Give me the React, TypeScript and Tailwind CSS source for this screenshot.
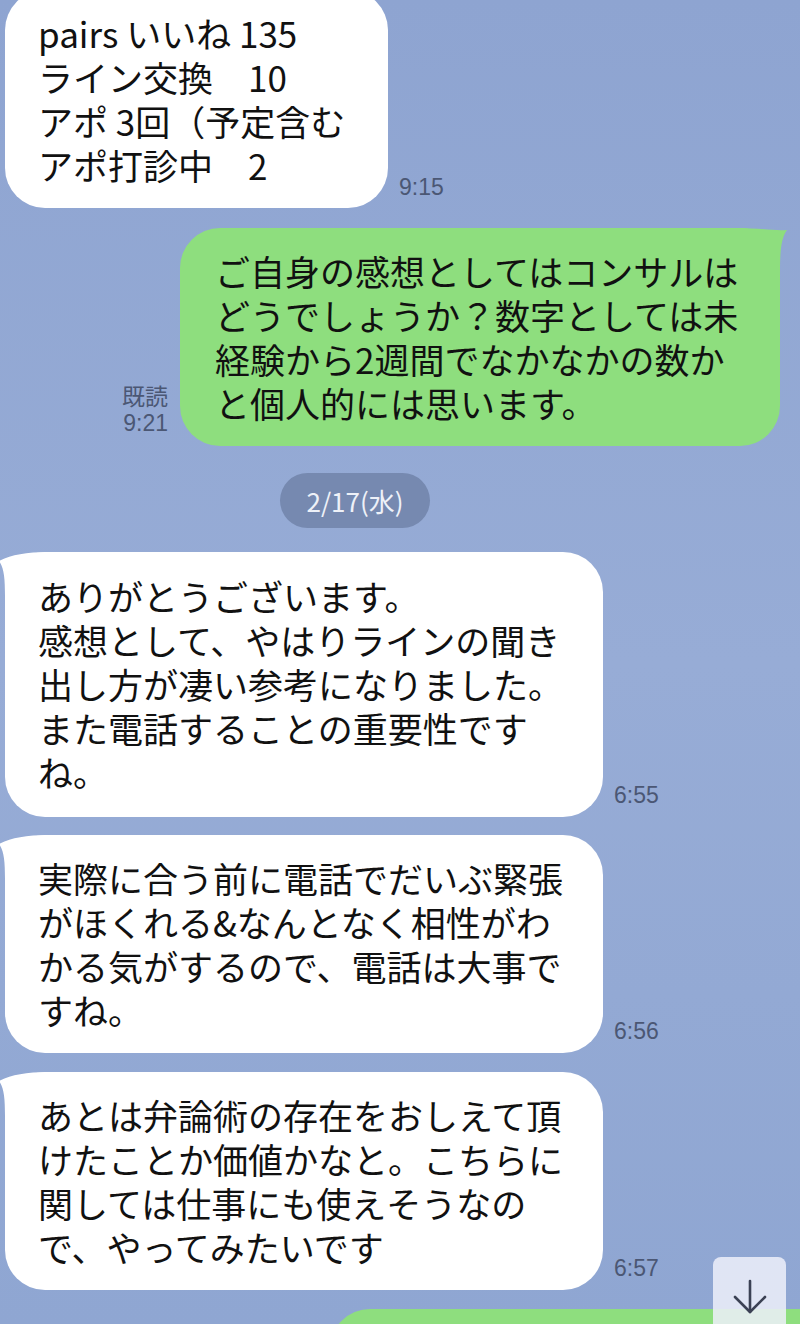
import React from 'react';

const jp = { fontFamily: '"Noto Sans CJK JP", "Noto Sans", sans-serif' };
const num = { fontFamily: '"Liberation Sans", "Noto Sans CJK JP", sans-serif' };

function LeftTail() {
  return (
    <svg className="absolute -left-[6px] top-0" width="50" height="44" viewBox="-6 0 50 44">
      <path d="M44 0 C20 0 6 3 -6 9 C-1 16 0 26 0 44 L44 44 Z" fill="#ffffff" />
    </svg>
  );
}

function RightTail() {
  return (
    <svg className="absolute -right-[7px] top-0" width="52" height="44" viewBox="-45 0 52 44">
      <path d="M-45 0 C-20 0 -6 3 7 2 C1 10 0 24 0 44 L-45 44 Z" fill="#8ede7e" />
    </svg>
  );
}

function Time({ t, mb = 'mb-[10px]' }: { t: string; mb?: string }) {
  return (
    <span className={`ml-[11px] ${mb} text-[23px] leading-[24px] text-[#4b5774]`} style={num}>
      {t}
    </span>
  );
}

function Incoming({
  lines,
  time,
  pad = 'py-[21px]',
  className = '',
}: {
  lines: string[];
  time: string;
  pad?: string;
  className?: string;
}) {
  return (
    <div className={`flex items-end ml-[5px] ${className}`}>
      <div className={`relative bg-white rounded-[40px] pl-[33px] w-[598px] ${pad}`}>
        <LeftTail />
        <div className="relative text-[35px] leading-[44px] text-[#111111] whitespace-pre" style={jp}>
          {lines.map((l, i) => (
            <div key={i}>{l}</div>
          ))}
        </div>
      </div>
      <Time t={time} />
    </div>
  );
}

export default function App() {
  return (
    <div className="relative w-[800px] h-[1324px] overflow-hidden bg-[#8fa6d2]">
      <div className="absolute inset-0 bg-gradient-to-b from-[#8ea4d1] via-[#97acd6] to-[#8fa6d2]" />
      <div className="relative flex flex-col">
        <div className="flex items-end ml-[5px] -mt-[10px]">
          <div className="relative bg-white rounded-[40px] pl-[33px] py-[21px] w-[383px]">
            <div className="text-[35px] leading-[44px] text-[#111111] whitespace-pre" style={jp}>
              <div>pairs いいね 135</div>
              <div>ライン交換　10</div>
              <div>アポ 3回（予定含む</div>
              <div>アポ打診中　2</div>
            </div>
          </div>
          <Time t="9:15" mb="mb-[9px]" />
        </div>

        <div className="flex items-end justify-end mr-[20px] mt-[20px]">
          <div className="flex flex-col items-end mr-[12px] mb-[9px] text-[23px] leading-[28px] text-[#4b5774]" style={jp}>
            <span>既読</span>
            <span style={num}>9:21</span>
          </div>
          <div className="relative bg-[#8ede7e] rounded-[40px] pl-[35px] py-[21px] w-[600px]">
            <RightTail />
            <div className="relative text-[35px] leading-[44px] text-[#111111] whitespace-pre" style={jp}>
              <div>ご自身の感想としてはコンサルは</div>
              <div>どうでしょうか？数字としては未</div>
              <div>経験から2週間でなかなかの数か</div>
              <div>と個人的には思います。</div>
            </div>
          </div>
        </div>

        <div className="ml-[280px] mt-[27px] w-[150px] h-[55px] rounded-full bg-[#7689b0] flex items-center justify-center">
          <span className="text-[26px] text-[#eef1f8]" style={jp}>2/17(水)</span>
        </div>

        <Incoming
          className="mt-[24px]"
          pad="pt-[22px] pb-[23px]"
          time="6:55"
          lines={[
            'ありがとうございます。',
            '感想として、やはりラインの聞き',
            '出し方が凄い参考になりました。',
            'また電話することの重要性です',
            'ね。',
          ]}
        />
        <Incoming
          className="mt-[18px]"
          time="6:56"
          lines={[
            '実際に合う前に電話でだいぶ緊張',
            'がほくれる&なんとなく相性がわ',
            'かる気がするので、電話は大事で',
            'すね。',
          ]}
        />
        <Incoming
          className="mt-[19px]"
          time="6:57"
          lines={[
            'あとは弁論術の存在をおしえて頂',
            'けたことか価値かなと。こちらに',
            '関しては仕事にも使えそうなの',
            'で、やってみたいです',
          ]}
        />

        <div className="ml-[330px] mt-[19px] w-[520px] h-[80px] rounded-[40px] bg-[#8ede7e]" />
      </div>

      <button className="absolute left-[713px] top-[1257px] w-[73px] h-[80px] rounded-[8px] bg-[#eef0fa]/85 flex justify-center pt-[22px]">
        <svg width="34" height="36" viewBox="0 0 34 36" fill="none" stroke="#3b4154" strokeWidth="2.6" strokeLinecap="round" strokeLinejoin="round">
          <path d="M17 2 V33" />
          <path d="M2 18 L17 33 L32 18" />
        </svg>
      </button>
    </div>
  );
}
